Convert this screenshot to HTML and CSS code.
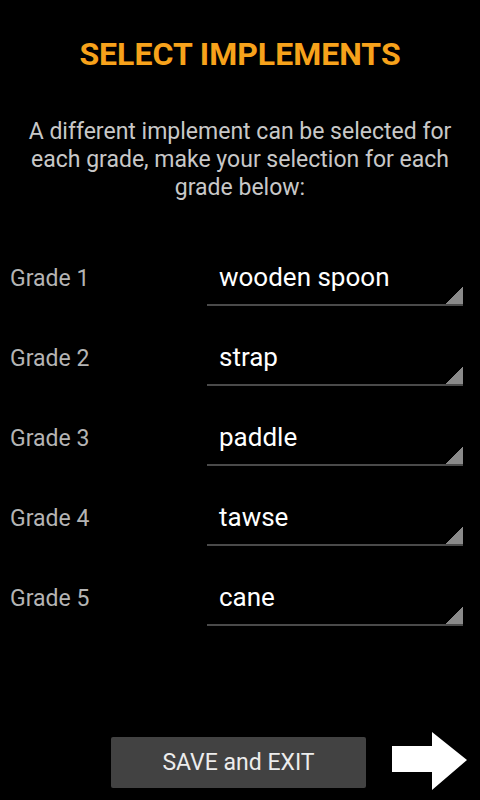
FILE: index.html
```html
<!DOCTYPE html>
<html lang="en">
<head>
    <meta charset="UTF-8">
    <meta name="viewport" content="width=device-width, initial-scale=1.0">
    <title>Select Implements</title>
    <link rel="stylesheet" href="styles.css">
</head>
<body>
    <div class="screen">
        <h1 class="title">SELECT IMPLEMENTS</h1>
        <p class="intro">A different implement can be selected for each grade, make your selection for each grade below:</p>

        <div class="grades">
            <div class="grade-row">
                <span class="grade-label">Grade 1</span>
                <div class="spinner">wooden spoon</div>
            </div>
            <div class="grade-row">
                <span class="grade-label">Grade 2</span>
                <div class="spinner">strap</div>
            </div>
            <div class="grade-row">
                <span class="grade-label">Grade 3</span>
                <div class="spinner">paddle</div>
            </div>
            <div class="grade-row">
                <span class="grade-label">Grade 4</span>
                <div class="spinner">tawse</div>
            </div>
            <div class="grade-row">
                <span class="grade-label">Grade 5</span>
                <div class="spinner">cane</div>
            </div>
        </div>

        <div class="footer">
            <button class="save-button">SAVE and EXIT</button>
            <svg class="next-arrow" width="76" height="58" viewBox="0 0 76 58">
                <polygon points="0,14 40,14 40,0 75,28 40,58 40,40 0,40" fill="#fff"/>
            </svg>
        </div>
    </div>
</body>
</html>
```

FILE: styles.css
```css
body {
    margin: 0;
    background-color: #000;
    font-family: Roboto, "Noto Sans", sans-serif;
}
.screen {
    display: flex;
    flex-direction: column;
    min-height: 800px;
    box-sizing: border-box;
    padding-bottom: 10px;
}
.title {
    margin: 36px 0 0;
    font-size: 32px;
    line-height: 36px;
    font-weight: bold;
    color: #f7a21b;
    text-align: center;
}
.intro {
    margin: 46px 20px 0;
    font-size: 23px;
    line-height: 28px;
    color: #c8c8c8;
    text-align: center;
}
.grades {
    display: flex;
    flex-direction: column;
    gap: 30px;
    margin-top: 54px;
}
.grade-row {
    display: flex;
    align-items: center;
    padding: 0 17px 0 10px;
}
.grade-label {
    width: 197px;
    font-size: 23px;
    color: #b4b4b4;
    margin-top: -5px;
}
.spinner {
    flex: 1;
    height: 42px;
    padding: 0 12px 6px;
    box-sizing: content-box;
    display: flex;
    align-items: center;
    font-size: 26px;
    color: #fff;
    border-bottom: 2px solid #4a4a4a;
    background: linear-gradient(to bottom right, transparent 50%, #8a8a8a 50%) no-repeat right bottom / 18px 17px;
}
.footer {
    margin-top: auto;
    display: flex;
    align-items: center;
    padding-left: 111px;
    gap: 26px;
}
.save-button {
    width: 255px;
    height: 51px;
    border: none;
    border-radius: 2px;
    background-color: #424242;
    color: #ececec;
    font-family: Roboto, "Noto Sans", sans-serif;
    font-size: 23px;
    margin-top: 2px;
}
```
